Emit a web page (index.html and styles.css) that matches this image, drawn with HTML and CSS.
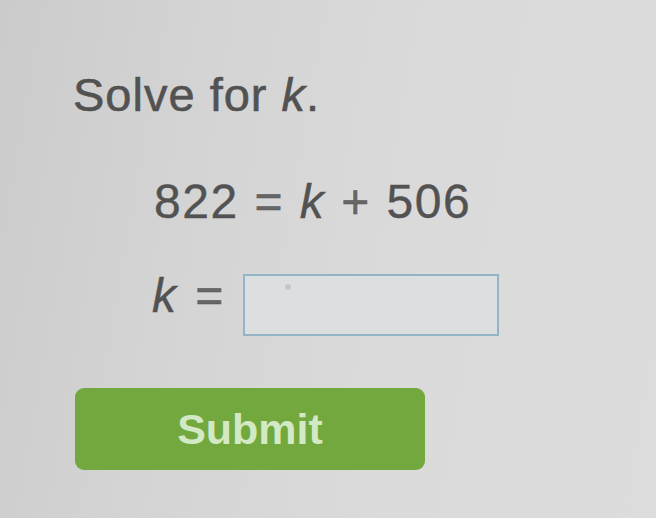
FILE: index.html
```html
<!DOCTYPE html>
<html>
<head>
<meta charset="utf-8">
<link rel="stylesheet" href="styles.css">
</head>
<body>
<main class="card">
  <p class="prompt">Solve for <i class="var">k</i>.</p>
  <div class="equation">822 <span class="op">=</span> <i class="var">k</i> <span class="op">+</span> 506</div>
  <div class="answer-row">
    <span class="label"><i class="var">k</i> <span class="op">=</span></span>
    <span class="answer-box"><span class="caret"></span></span>
  </div>
  <button class="submit">Submit</button>
</main>
</body>
</html>
```
FILE: styles.css
```css
html, body {
  margin: 0;
  padding: 0;
}
body {
  width: 656px;
  height: 518px;
  overflow: hidden;
  background: linear-gradient(100deg, #cbcbcb 0%, #d4d4d4 30%, #dadada 60%, #dbdcdb 100%);
  font-family: "Liberation Sans", Arial, sans-serif;
  color: #525252;
}
.card {
  display: flex;
  flex-direction: column;
  padding: 68px 0 0 73px;
}
.prompt {
  margin: 0;
  font-size: 47px;
  line-height: 54px;
  letter-spacing: 1px;
  -webkit-text-stroke: 0.6px #525252;
}
.var {
  font-style: italic;
}
.equation {
  margin: 52px 0 0 81px;
  font-size: 48px;
  line-height: 56px;
  letter-spacing: 1.5px;
  word-spacing: 1px;
  -webkit-text-stroke: 0.4px #525252;
}
.op {
  color: #666;
}
.answer-row {
  display: flex;
  align-items: flex-start;
  gap: 20px;
  margin: 38px 0 0 79px;
}
.label {
  font-size: 48px;
  line-height: 56px;
  word-spacing: 6px;
  -webkit-text-stroke: 0.4px #525252;
}
.answer-box {
  position: relative;
  margin-top: 6px;
  width: 256px;
  height: 62px;
  border: 2px solid #93b4c4;
  background: #dcdedf;
  box-sizing: border-box;
}
.caret {
  position: absolute;
  left: 40px;
  top: 8px;
  width: 6px;
  height: 6px;
  border-radius: 50%;
  background: #c4c8cc;
}
.submit {
  margin-top: 52px;
  margin-left: 2px;
  width: 350px;
  height: 82px;
  border: none;
  border-radius: 9px;
  background: #72a83d;
  color: #d3e9c6;
  font-family: "Liberation Sans", Arial, sans-serif;
  font-weight: bold;
  font-size: 43px;
  padding: 0;
  text-align: center;
}
```
